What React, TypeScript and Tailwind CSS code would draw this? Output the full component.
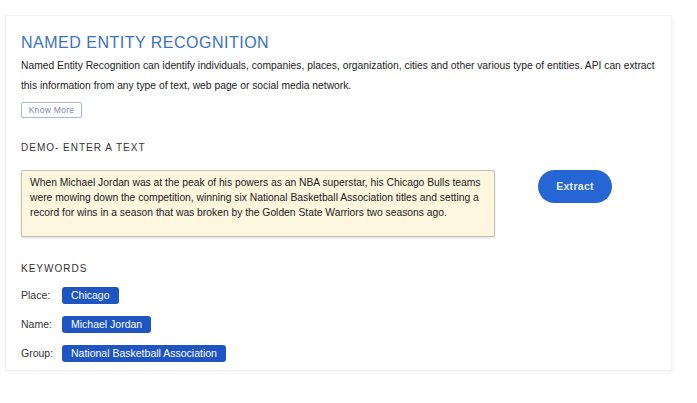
import React from 'react';

const keywords = [
  { label: 'Place:', value: 'Chicago' },
  { label: 'Name:', value: 'Michael Jordan' },
  { label: 'Group:', value: 'National Basketball Association' },
];

export default function App() {
  return (
    <div className="w-[697px] h-[403px] bg-white overflow-hidden font-['Liberation_Sans',Arial,sans-serif]">
      <div className="mt-[15px] ml-[5px] w-[667px] h-[356px] bg-white border border-[#f1f1f1] shadow-[2px_2px_4px_rgba(0,0,0,0.04)] pl-[15px] pt-[17px]">
        {/* Header */}
        <h1 className="text-[16px] leading-[20px] tracking-[0.5px] text-[#3b71c6]">NAMED ENTITY RECOGNITION</h1>
        <p className="mt-[3px] w-[648px] text-[10.3px] leading-[20px] text-[#222]">
          Named Entity Recognition can identify individuals, companies, places, organization, cities and other various type of entities. API can extract this information from any type of text, web page or social media network.
        </p>
        <button className="mt-[6px] h-[16px] w-[61px] flex items-center justify-center border border-[#a9b6d8] rounded-[2px] text-[8.5px] text-[#7b8ab4] tracking-[0.3px]">
          Know More
        </button>

        {/* Demo */}
        <h2 className="mt-[23px] text-[10px] leading-[14px] tracking-[1px] text-[#333]">DEMO- ENTER A TEXT</h2>
        <div className="mt-[15px] flex items-start">
          <div className="w-[474px] h-[67px] bg-[#fdf7df] border border-[#c3c0b4] rounded-[2px] shadow-[0_1px_2px_rgba(0,0,0,0.15)] pl-[8px] pr-[6px] pt-[4px] text-[10.3px] leading-[15px] text-[#222]">
            When Michael Jordan was at the peak of his powers as an NBA superstar, his Chicago Bulls teams were mowing down the competition, winning six National Basketball Association titles and setting a record for wins in a season that was broken by the Golden State Warriors two seasons ago.
          </div>
          <button className="ml-[43px] w-[74px] h-[33px] rounded-full bg-[#2566d4] text-[#e8efff] text-[10.5px] font-semibold tracking-[0.3px]">
            Extract
          </button>
        </div>

        {/* Keywords */}
        <h2 className="mt-[25px] text-[10px] leading-[14px] tracking-[1px] text-[#333]">KEYWORDS</h2>
        <div className="mt-[11px] flex flex-col gap-[12px]">
          {keywords.map((k) => (
            <div key={k.label} className="flex items-center h-[17px]">
              <span className="w-[41px] text-[10.5px] text-[#333]">{k.label}</span>
              <span className="h-[17px] px-[9px] flex items-center bg-[#1e55c3] rounded-[3px] text-white text-[10.5px]">
                {k.value}
              </span>
            </div>
          ))}
        </div>
      </div>
    </div>
  );
}
